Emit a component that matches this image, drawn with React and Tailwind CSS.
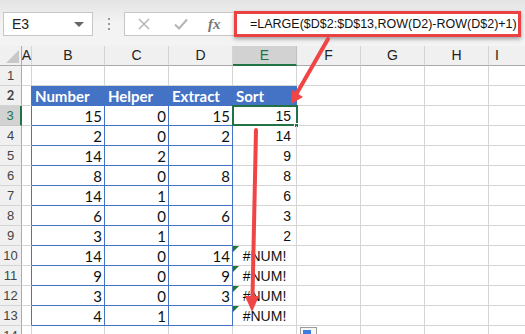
const rows = [
  { b: 15, c: 0, d: 15, e: "15" },
  { b: 2, c: 0, d: 2, e: "14" },
  { b: 14, c: 2, d: "", e: "9" },
  { b: 8, c: 0, d: 8, e: "8" },
  { b: 14, c: 1, d: "", e: "6" },
  { b: 6, c: 0, d: 6, e: "3" },
  { b: 3, c: 1, d: "", e: "2" },
  { b: 14, c: 0, d: 14, e: "#NUM!" },
  { b: 9, c: 0, d: 9, e: "#NUM!" },
  { b: 3, c: 0, d: 3, e: "#NUM!" },
  { b: 4, c: 1, d: "", e: "#NUM!" },
];

const calibri = { fontFamily: "Lato, 'Liberation Sans', sans-serif" };

function RowHead({ n, active }) {
  return (
    <div
      className={
        active
          ? "h-5 w-[22px] shrink-0 flex items-center justify-center bg-[#d2d2d2] text-[#217346] border-b border-[#c8c8c8] border-r-2 border-r-[#217346] text-[13px]"
          : "h-5 w-[22px] shrink-0 flex items-center justify-center bg-[#f0f0f0] text-[#444] border-b border-[#d4d4d4] border-r border-r-[#ababab] text-[13px]"
      }
    >
      {n}
    </div>
  );
}

function Grey({ w = "w-16" }) {
  return <div className={`${w} h-5 shrink-0 border-r border-b border-[#d4d4d4]`} />;
}

export default function App() {
  return (
    <div
      className="relative w-[525px] h-[334px] overflow-hidden bg-white"
      style={{ fontFamily: "'Liberation Sans', Arial, sans-serif" }}
    >
      {/* toolbar */}
      <div className="h-[46px] flex items-start pt-3 bg-gradient-to-b from-[#e4e4e4] via-[#f3f3f3] to-[#f3f3f3]">
        <div className="ml-[3px] w-[90px] h-6 bg-white border border-[#c6c6c6] flex items-center justify-between px-2 text-[14px] text-[#222]">
          <span>E3</span>
          <span className="w-0 h-0 border-l-[5px] border-r-[5px] border-t-[5px] border-l-transparent border-r-transparent border-t-[#666]" />
        </div>
        <div className="w-[31px] h-6 flex flex-col items-center justify-center gap-[3px]">
          <span className="w-[2px] h-[2px] bg-[#999]" />
          <span className="w-[2px] h-[2px] bg-[#999]" />
          <span className="w-[2px] h-[2px] bg-[#999]" />
        </div>
        <div className="w-[110px] h-6 bg-white border border-[#c6c6c6] border-r-0 flex items-center">
          <svg width="12" height="12" viewBox="0 0 12 12" className="ml-[13px]">
            <path d="M1 1L11 11M11 1L1 11" stroke="#b4b4b4" strokeWidth="1.5" />
          </svg>
          <svg width="14" height="12" viewBox="0 0 14 12" className="ml-[24px]">
            <path d="M1 6.5L5 10.5L13 1.5" stroke="#b4b4b4" strokeWidth="2" fill="none" />
          </svg>
          <span
            className="ml-[20px] text-[15px] italic font-bold text-[#777]"
            style={{ fontFamily: "'Liberation Serif', serif" }}
          >
            fx
          </span>
        </div>
        <div className="-mt-[1px] w-[287px] h-[26px] bg-white border-[3px] border-[#ea4143] shadow-[0_2px_4px_rgba(0,0,0,0.35)] flex items-center pl-[13px] text-[12.5px] text-[#111] whitespace-nowrap overflow-hidden">
          =LARGE($D$2:$D$13,ROW(D2)-ROW(D$2)+1)
        </div>
      </div>

      {/* column headers */}
      <div className="flex h-5 text-[14px] text-[#222]">
        <div className="relative w-[22px] shrink-0 bg-[#f0f0f0] border-r border-b border-[#ababab]">
          <svg className="absolute right-[2px] bottom-[2px]" width="13" height="13" viewBox="0 0 13 13">
            <polygon points="13,0 13,13 0,13" fill="#c8c8c8" />
          </svg>
        </div>
        <div className="w-[10px] shrink-0 flex items-center justify-center bg-[#f0f0f0] border-r border-b border-r-[#d4d4d4] border-b-[#ababab]">A</div>
        <div className="w-[73px] shrink-0 flex items-center justify-center bg-[#f0f0f0] border-r border-b border-r-[#d4d4d4] border-b-[#ababab]">B</div>
        <div className="w-16 shrink-0 flex items-center justify-center bg-[#f0f0f0] border-r border-b border-r-[#d4d4d4] border-b-[#ababab]">C</div>
        <div className="w-16 shrink-0 flex items-center justify-center bg-[#f0f0f0] border-r border-b border-r-[#d4d4d4] border-b-[#ababab]">D</div>
        <div className="w-16 shrink-0 flex items-center justify-center bg-[#d2d2d2] text-[#217346] border-r border-r-[#c0c0c0] border-b-2 border-b-[#217346]">E</div>
        <div className="w-16 shrink-0 flex items-center justify-center bg-[#f0f0f0] border-r border-b border-r-[#d4d4d4] border-b-[#ababab]">F</div>
        <div className="w-16 shrink-0 flex items-center justify-center bg-[#f0f0f0] border-r border-b border-r-[#d4d4d4] border-b-[#ababab]">G</div>
        <div className="w-16 shrink-0 flex items-center justify-center bg-[#f0f0f0] border-r border-b border-r-[#d4d4d4] border-b-[#ababab]">H</div>
        <div className="w-16 shrink-0 flex items-center justify-start pl-[6px] bg-[#f0f0f0] border-b border-b-[#ababab]">I</div>
      </div>

      {/* row 1 */}
      <div className="flex">
        <RowHead n={1} />
        <Grey w="w-[10px]" />
        <Grey w="w-[73px]" />
        <Grey />
        <Grey />
        <Grey />
        <Grey />
        <Grey />
        <Grey />
        <Grey />
      </div>

      {/* row 2 header */}
      <div className="flex text-white font-bold text-[15px]" style={calibri}>
        <RowHead n={2} />
        <div className="w-[10px] h-5 shrink-0 border-r border-b border-b-[#d4d4d4] border-r-[#4472c4]" />
        <div className="w-[73px] h-5 shrink-0 bg-[#4472c4] border-r border-b border-[#4472c4] pl-[3px] leading-5">Number</div>
        <div className="w-16 h-5 shrink-0 bg-[#4472c4] border-r border-b border-[#4472c4] pl-[3px] leading-5">Helper</div>
        <div className="w-16 h-5 shrink-0 bg-[#4472c4] border-r border-b border-[#4472c4] pl-[3px] leading-5">Extract</div>
        <div className="w-16 h-5 shrink-0 bg-[#4472c4] border-r border-b border-[#4472c4] pl-[3px] leading-5">Sort</div>
        <Grey />
        <Grey />
        <Grey />
        <Grey />
      </div>

      {rows.map((r, i) => {
        const err = r.e === "#NUM!";
        return (
          <div key={i} className="flex text-[15px] text-[#111]">
            <RowHead n={i + 3} active={i === 0} />
            <div className="w-[10px] h-5 shrink-0 border-r border-b border-b-[#d4d4d4] border-r-[#4472c4]" />
            <div className="w-[73px] h-5 shrink-0 border-r border-b border-[#4472c4] text-right pr-[2px] leading-5" style={calibri}>{r.b}</div>
            <div className="w-16 h-5 shrink-0 border-r border-b border-[#4472c4] text-right pr-[2px] leading-5" style={calibri}>{r.c}</div>
            <div className="w-16 h-5 shrink-0 border-r border-b border-[#4472c4] text-right pr-[2px] leading-5" style={calibri}>{r.d}</div>
            <div
              className={
                err
                  ? "relative w-16 h-5 shrink-0 border-r border-b border-[#d4d4d4] text-center leading-5 text-[14px]"
                  : "relative w-16 h-5 shrink-0 border-r border-b border-[#d4d4d4] text-right pr-[5px] leading-5 text-[14px]"
              }
            >
              {err && (
                <span className="absolute left-0 top-0 w-0 h-0 border-t-[6px] border-r-[6px] border-t-[#1e7b2e] border-r-transparent" />
              )}
              {r.e}
              {i === 0 && (
                <>
                  <span className="absolute -left-[1px] -top-[1px] w-[66px] h-[21px] border-2 border-[#217346]" />
                  <span className="absolute -right-[3px] -bottom-[3px] w-[5px] h-[5px] bg-[#217346] border border-white" />
                </>
              )}
            </div>
            <Grey />
            <Grey />
            <Grey />
            <Grey />
          </div>
        );
      })}

      {/* row 14 */}
      <div className="flex">
        <RowHead n={14} />
        <Grey w="w-[10px]" />
        <Grey w="w-[73px]" />
        <Grey />
        <Grey />
        <Grey />
        <Grey />
        <Grey />
        <Grey />
        <Grey />
      </div>

      {/* quick analysis icon */}
      <div className="absolute left-[300px] top-[327px] w-[17px] h-[12px] bg-[#f7f7f7] border border-[#9a9a9a] p-[2px]">
        <div className="w-[8px] h-[7px] bg-[#3c7be0]" />
      </div>

      {/* annotation arrows */}
      <svg className="absolute inset-0 pointer-events-none" width="525" height="334">
        <line x1="328" y1="39" x2="297" y2="93" stroke="#f04545" strokeWidth="4" strokeLinecap="round" />
        <polygon points="291,104 303,97 292,90" fill="#f04545" />
        <line x1="256" y1="130" x2="252.5" y2="297" stroke="#f04545" strokeWidth="4" strokeLinecap="round" />
        <polygon points="252,312 245,296 259,296" fill="#f04545" />
      </svg>
    </div>
  );
}
